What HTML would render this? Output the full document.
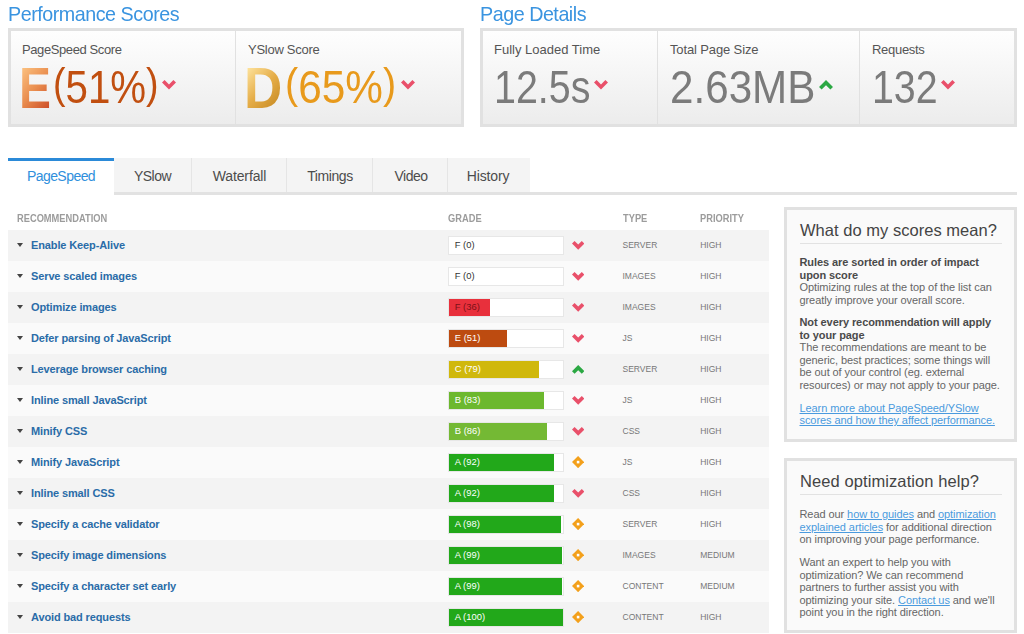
<!DOCTYPE html>
<html><head><meta charset="utf-8"><title>Report</title>
<style>
*{box-sizing:border-box;margin:0;padding:0}
html,body{width:1024px;height:634px;overflow:hidden;background:#fff}
body{font-family:"Liberation Sans",sans-serif;color:#444;position:relative}
a{color:#4a9ade;text-decoration:underline}
.h1{position:absolute;top:1.4px;font-size:21px;color:#3a94e0;line-height:26px;white-space:nowrap;letter-spacing:-0.5px;transform-origin:0 0;transform:scaleX(.938)}
.box{position:absolute;top:28px;height:99px;border:3px solid #e1e1e1;background:linear-gradient(#fefefe,#ececec)}
.cell{position:absolute;top:0;bottom:0;border-left:1px solid #e1e1e1}
.cell:first-child{border-left:0}
.lab{position:absolute;left:11px;top:11px;font-size:13px;color:#555;white-space:nowrap}
.val{position:absolute;left:11px;top:28px;font-size:46px;line-height:56px;white-space:nowrap;color:#7b7b7b;transform-origin:0 0;transform:scaleX(.88)}
.big{position:absolute;left:8px;top:28.6px;font-size:57px;line-height:56px;font-weight:bold;transform-origin:0 0;transform:scaleX(.84);-webkit-background-clip:text;background-clip:text;color:transparent}
.chev{position:absolute;top:49.4px}
.pp{font-size:43px;position:relative;top:-4.6px}
.tabs{position:absolute;left:8px;top:158px;width:1009px;height:37px;border-bottom:3px solid #e2e2e2}
.tab{position:absolute;top:0;height:34px;background:#f4f4f4;border-left:1px solid #e5e5e5;font-size:14px;line-height:37px;text-align:center;color:#4c4c4c}
.tab.act{background:#fff;border-left:0;border-top:3px solid #2b8ad8;height:37px;color:#2f8fdc;line-height:31px}
.th{position:absolute;top:213px;font-size:10px;font-weight:bold;color:#9c9c9c;line-height:12px;white-space:nowrap;transform-origin:0 0;transform:scaleX(.93)}
.row{position:absolute;left:8px;width:761px;height:31px;font-size:11px;line-height:31px;white-space:nowrap}
.row.odd{background:#f3f3f3}
.row.even{background:#fafafa}
.tri{position:absolute;left:9px;top:13px;width:0;height:0;border-left:3.5px solid transparent;border-right:3.5px solid transparent;border-top:4px solid #444}
.nm{position:absolute;left:23px;top:0;font-weight:bold;color:#2a6ca8;font-size:11px;letter-spacing:-0.12px}
.bar{position:absolute;left:440.2px;top:6px;width:116px;height:19px;background:#fff;border:1px solid #e7e7e7}
.fill{position:absolute;left:0;top:0;height:17px}
.gl{position:absolute;left:5.6px;top:-.7px;line-height:17px;font-size:9.4px}
.ic{position:absolute;left:563.8px;top:11.2px}
.ty{position:absolute;left:614.5px;top:0;font-size:8.5px;color:#777}
.pr{position:absolute;left:692.2px;top:0;font-size:8.5px;color:#777}
.side{position:absolute;left:784px;width:233px;border:3px solid #e1e1e1;background:#fafafa;font-size:11px;line-height:12.5px;color:#666;letter-spacing:-.08px}
.side h3{position:absolute;left:13px;top:8.5px;width:202px;height:25.5px;font-weight:normal;font-size:16.5px;line-height:22px;color:#444;letter-spacing:0.03px;border-bottom:1px solid #e2e2e2;white-space:nowrap}
.side p{position:absolute;left:12.5px;white-space:nowrap}
.side b{color:#4a4a4a}
</style></head><body>
<div class="h1" style="left:8px">Performance Scores</div>
<div class="h1" style="left:480px">Page Details</div>

<div class="box" style="left:8px;width:456px">
  <div class="cell" style="left:0;width:224px"><div class="lab" style="letter-spacing:-.4px">PageSpeed Score</div><div class="big" style="background-image:linear-gradient(135deg,#fcc483 10%,#ea8f50 50%,#cb4a26 92%)">E</div><div class="val" style="left:42px;color:#c14f10;transform:scaleX(.875)"><span class="pp">(</span>51%<span class="pp">)</span></div><svg class="chev" style="left:151.2px" width="14" height="9.6" viewBox="0 0 14 9.6"><path d="M0 2.6 L2.6 0 L7 4.4 L11.4 0 L14 2.6 L7 9.6 Z" fill="#e9506a"/></svg></div>
  <div class="cell" style="left:224px;right:0"><div class="lab" style="left:12px;letter-spacing:-.27px">YSlow Score</div><div class="big" style="background-image:linear-gradient(135deg,#fde29c 12%,#e5ad48 50%,#c78a22 88%);transform:scaleX(.93);left:8px">D</div><div class="val" style="left:49px;color:#e89a1c;transform:scaleX(.92)"><span class="pp">(</span>65%<span class="pp">)</span></div><svg class="chev" style="left:165.3px" width="14" height="9.6" viewBox="0 0 14 9.6"><path d="M0 2.6 L2.6 0 L7 4.4 L11.4 0 L14 2.6 L7 9.6 Z" fill="#e9506a"/></svg></div>
</div>
<div class="box" style="left:480px;width:537px">
  <div class="cell" style="left:0;width:174px"><div class="lab">Fully Loaded Time</div><div class="val" style="transform:scaleX(.857)">12.5s</div><svg class="chev" style="left:111px" width="14" height="9.6" viewBox="0 0 14 9.6"><path d="M0 2.6 L2.6 0 L7 4.4 L11.4 0 L14 2.6 L7 9.6 Z" fill="#e9506a"/></svg></div>
  <div class="cell" style="left:174px;width:202px"><div class="lab" style="left:12px;letter-spacing:-.13px">Total Page Size</div><div class="val" style="left:12px;transform:scaleX(.917)">2.63MB</div><svg class="chev" style="left:160.7px" width="14" height="9.6" viewBox="0 0 14 9.6"><path d="M0 7 L7 0 L14 7 L11.4 9.6 L7 5.2 L2.6 9.6 Z" fill="#2ba843"/></svg></div>
  <div class="cell" style="left:376px;right:0"><div class="lab" style="left:12px;letter-spacing:-.3px">Requests</div><div class="val" style="left:12px;transform:scaleX(.855)">132</div><svg class="chev" style="left:81px" width="14" height="9.6" viewBox="0 0 14 9.6"><path d="M0 2.6 L2.6 0 L7 4.4 L11.4 0 L14 2.6 L7 9.6 Z" fill="#e9506a"/></svg></div>
</div>

<div class="tabs">
  <div class="tab act" style="left:0;width:106px;letter-spacing:-.55px">PageSpeed</div>
  <div class="tab" style="left:106px;width:77px;border-left:0;letter-spacing:-.52px">YSlow</div>
  <div class="tab" style="left:183px;width:95px;letter-spacing:-.13px;padding-left:1px">Waterfall</div>
  <div class="tab" style="left:278px;width:86px;letter-spacing:-.4px;padding-left:1px">Timings</div>
  <div class="tab" style="left:364px;width:75px;letter-spacing:-.53px;padding-left:2px">Video</div>
  <div class="tab" style="left:439px;width:83px;letter-spacing:-.13px;padding-right:2px">History</div>
</div>

<div class="th" style="left:17px">RECOMMENDATION</div>
<div class="th" style="left:448px">GRADE</div>
<div class="th" style="left:622.5px">TYPE</div>
<div class="th" style="left:700px">PRIORITY</div>
<div class="row odd" style="top:230px"><i class="tri"></i><span class="nm">Enable Keep-Alive</span><div class="bar"><div class="fill" style="width:0px;background:#fff"></div><span class="gl" style="color:#333">F (0)</span></div><svg class="ic" width="12.4" height="8.8" viewBox="0 0 12.4 8.8"><path d="M0 2.6 L2.6 0 L6.2 3.6 L9.8 0 L12.4 2.6 L6.2 8.8 Z" fill="#e9506a"/></svg><span class="ty">SERVER</span><span class="pr">HIGH</span></div>
<div class="row even" style="top:261px"><i class="tri"></i><span class="nm">Serve scaled images</span><div class="bar"><div class="fill" style="width:0px;background:#fff"></div><span class="gl" style="color:#333">F (0)</span></div><svg class="ic" width="12.4" height="8.8" viewBox="0 0 12.4 8.8"><path d="M0 2.6 L2.6 0 L6.2 3.6 L9.8 0 L12.4 2.6 L6.2 8.8 Z" fill="#e9506a"/></svg><span class="ty">IMAGES</span><span class="pr">HIGH</span></div>
<div class="row odd" style="top:292px"><i class="tri"></i><span class="nm">Optimize images</span><div class="bar"><div class="fill" style="width:41px;background:#e8303c"></div><span class="gl" style="color:#7a1018">F (36)</span></div><svg class="ic" width="12.4" height="8.8" viewBox="0 0 12.4 8.8"><path d="M0 2.6 L2.6 0 L6.2 3.6 L9.8 0 L12.4 2.6 L6.2 8.8 Z" fill="#e9506a"/></svg><span class="ty">IMAGES</span><span class="pr">HIGH</span></div>
<div class="row even" style="top:323px"><i class="tri"></i><span class="nm">Defer parsing of JavaScript</span><div class="bar"><div class="fill" style="width:58px;background:#bd4b10"></div><span class="gl" style="color:#fff">E (51)</span></div><svg class="ic" width="12.4" height="8.8" viewBox="0 0 12.4 8.8"><path d="M0 2.6 L2.6 0 L6.2 3.6 L9.8 0 L12.4 2.6 L6.2 8.8 Z" fill="#e9506a"/></svg><span class="ty">JS</span><span class="pr">HIGH</span></div>
<div class="row odd" style="top:354px"><i class="tri"></i><span class="nm">Leverage browser caching</span><div class="bar"><div class="fill" style="width:90px;background:#d0b80c"></div><span class="gl" style="color:#fff">C (79)</span></div><svg class="ic" width="12.4" height="8.8" viewBox="0 0 12.4 8.8"><path d="M0 6.2 L6.2 0 L12.4 6.2 L9.8 8.8 L6.2 5.2 L2.6 8.8 Z" fill="#2ba843"/></svg><span class="ty">SERVER</span><span class="pr">HIGH</span></div>
<div class="row even" style="top:385px"><i class="tri"></i><span class="nm">Inline small JavaScript</span><div class="bar"><div class="fill" style="width:95px;background:#6cb82e"></div><span class="gl" style="color:#fff">B (83)</span></div><svg class="ic" width="12.4" height="8.8" viewBox="0 0 12.4 8.8"><path d="M0 2.6 L2.6 0 L6.2 3.6 L9.8 0 L12.4 2.6 L6.2 8.8 Z" fill="#e9506a"/></svg><span class="ty">JS</span><span class="pr">HIGH</span></div>
<div class="row odd" style="top:416px"><i class="tri"></i><span class="nm">Minify CSS</span><div class="bar"><div class="fill" style="width:98px;background:#74b934"></div><span class="gl" style="color:#fff">B (86)</span></div><svg class="ic" width="12.4" height="8.8" viewBox="0 0 12.4 8.8"><path d="M0 2.6 L2.6 0 L6.2 3.6 L9.8 0 L12.4 2.6 L6.2 8.8 Z" fill="#e9506a"/></svg><span class="ty">CSS</span><span class="pr">HIGH</span></div>
<div class="row even" style="top:447px"><i class="tri"></i><span class="nm">Minify JavaScript</span><div class="bar"><div class="fill" style="width:105px;background:#22a81a"></div><span class="gl" style="color:#fff">A (92)</span></div><svg class="ic" width="12.2" height="12.2" viewBox="0 0 12.2 12.2" style="top:9.1px"><path d="M6.1 0 L12.2 6.1 L6.1 12.2 L0 6.1 Z" fill="#f3a01b"/><rect x="4.8" y="4.8" width="2.6" height="2.6" fill="#fff"/></svg><span class="ty">JS</span><span class="pr">HIGH</span></div>
<div class="row odd" style="top:478px"><i class="tri"></i><span class="nm">Inline small CSS</span><div class="bar"><div class="fill" style="width:105px;background:#22a81a"></div><span class="gl" style="color:#fff">A (92)</span></div><svg class="ic" width="12.4" height="8.8" viewBox="0 0 12.4 8.8"><path d="M0 2.6 L2.6 0 L6.2 3.6 L9.8 0 L12.4 2.6 L6.2 8.8 Z" fill="#e9506a"/></svg><span class="ty">CSS</span><span class="pr">HIGH</span></div>
<div class="row even" style="top:509px"><i class="tri"></i><span class="nm">Specify a cache validator</span><div class="bar"><div class="fill" style="width:112px;background:#22a81a"></div><span class="gl" style="color:#fff">A (98)</span></div><svg class="ic" width="12.2" height="12.2" viewBox="0 0 12.2 12.2" style="top:9.1px"><path d="M6.1 0 L12.2 6.1 L6.1 12.2 L0 6.1 Z" fill="#f3a01b"/><rect x="4.8" y="4.8" width="2.6" height="2.6" fill="#fff"/></svg><span class="ty">SERVER</span><span class="pr">HIGH</span></div>
<div class="row odd" style="top:540px"><i class="tri"></i><span class="nm">Specify image dimensions</span><div class="bar"><div class="fill" style="width:113px;background:#22a81a"></div><span class="gl" style="color:#fff">A (99)</span></div><svg class="ic" width="12.2" height="12.2" viewBox="0 0 12.2 12.2" style="top:9.1px"><path d="M6.1 0 L12.2 6.1 L6.1 12.2 L0 6.1 Z" fill="#f3a01b"/><rect x="4.8" y="4.8" width="2.6" height="2.6" fill="#fff"/></svg><span class="ty">IMAGES</span><span class="pr">MEDIUM</span></div>
<div class="row even" style="top:571px"><i class="tri"></i><span class="nm">Specify a character set early</span><div class="bar"><div class="fill" style="width:113px;background:#22a81a"></div><span class="gl" style="color:#fff">A (99)</span></div><svg class="ic" width="12.2" height="12.2" viewBox="0 0 12.2 12.2" style="top:9.1px"><path d="M6.1 0 L12.2 6.1 L6.1 12.2 L0 6.1 Z" fill="#f3a01b"/><rect x="4.8" y="4.8" width="2.6" height="2.6" fill="#fff"/></svg><span class="ty">CONTENT</span><span class="pr">MEDIUM</span></div>
<div class="row odd" style="top:602px"><i class="tri"></i><span class="nm">Avoid bad requests</span><div class="bar"><div class="fill" style="width:114px;background:#22a81a"></div><span class="gl" style="color:#fff">A (100)</span></div><svg class="ic" width="12.2" height="12.2" viewBox="0 0 12.2 12.2" style="top:9.1px"><path d="M6.1 0 L12.2 6.1 L6.1 12.2 L0 6.1 Z" fill="#f3a01b"/><rect x="4.8" y="4.8" width="2.6" height="2.6" fill="#fff"/></svg><span class="ty">CONTENT</span><span class="pr">HIGH</span></div>

<div class="side" style="top:207px;height:235px">
  <h3>What do my scores mean?</h3>
  <p style="top:46px"><b>Rules are sorted in order of impact<br>upon score</b><br>Optimizing rules at the top of the list can<br>greatly improve your overall score.</p>
  <p style="top:106px"><b>Not every recommendation will apply<br>to your page</b><br>The recommendations are meant to be<br>generic, best practices; some things will<br>be out of your control (eg. external<br>resources) or may not apply to your page.</p>
  <p style="top:191.5px"><a>Learn more about PageSpeed/YSlow<br>scores and how they affect performance.</a></p>
</div>
<div class="side" style="top:458px;height:175px">
  <h3 style="letter-spacing:.09px">Need optimization help?</h3>
  <p style="top:47px">Read our <a>how to guides</a> and <a>optimization<br>explained articles</a> for additional direction<br>on improving your page performance.</p>
  <p style="top:95px">Want an expert to help you with<br>optimization? We can recommend<br>partners to further assist you with<br>optimizing your site. <a>Contact us</a> and we'll<br>point you in the right direction.</p>
</div>
</body></html>
